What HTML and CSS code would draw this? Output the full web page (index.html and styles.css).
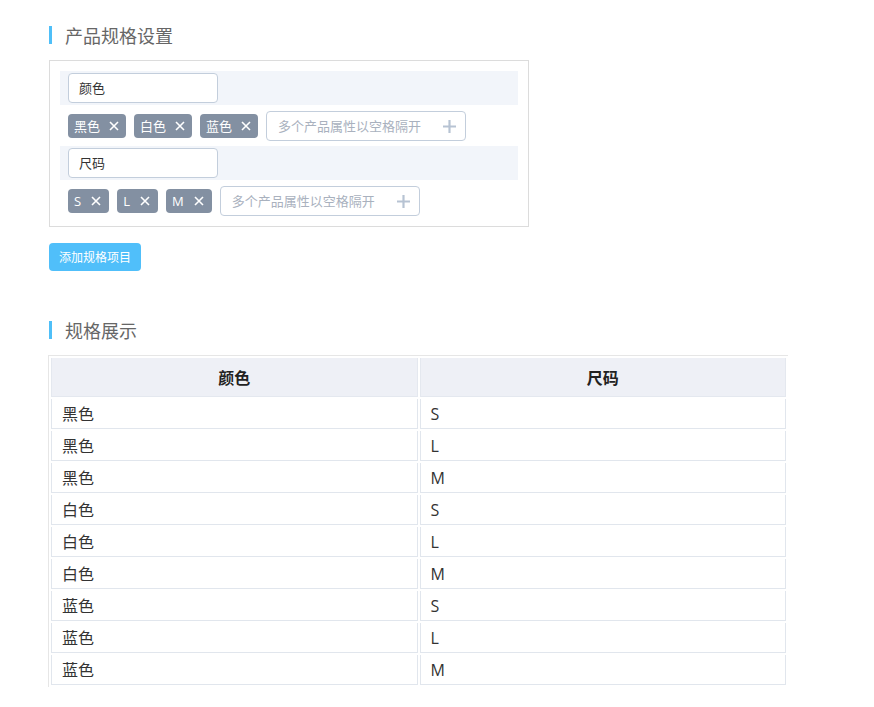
FILE: index.html
```html
<!DOCTYPE html>
<html lang="zh">
<head>
<meta charset="utf-8">
<title>产品规格设置</title>
<link rel="stylesheet" href="styles.css">
</head>
<body>
<div class="page">
  <div class="title"><span class="bar"></span><span class="title-text">产品规格设置</span></div>
  <div class="spec-box">
    <div class="group">
      <div class="group-head"><div class="name-input">颜色</div></div>
      <div class="tag-row">
        <span class="tag">黑色<svg class="x" viewBox="0 0 10 10"><path d="M1 1L9 9M9 1L1 9"/></svg></span>
        <span class="tag">白色<svg class="x" viewBox="0 0 10 10"><path d="M1 1L9 9M9 1L1 9"/></svg></span>
        <span class="tag">蓝色<svg class="x" viewBox="0 0 10 10"><path d="M1 1L9 9M9 1L1 9"/></svg></span>
        <div class="add-input"><span class="ph">多个产品属性以空格隔开</span><svg class="plus" viewBox="0 0 12 12"><path d="M6 0V12M0 6H12"/></svg></div>
      </div>
    </div>
    <div class="group">
      <div class="group-head"><div class="name-input">尺码</div></div>
      <div class="tag-row">
        <span class="tag tag-en">S<svg class="x" viewBox="0 0 10 10"><path d="M1 1L9 9M9 1L1 9"/></svg></span>
        <span class="tag tag-en">L<svg class="x" viewBox="0 0 10 10"><path d="M1 1L9 9M9 1L1 9"/></svg></span>
        <span class="tag tag-en">M<svg class="x" viewBox="0 0 10 10"><path d="M1 1L9 9M9 1L1 9"/></svg></span>
        <div class="add-input"><span class="ph">多个产品属性以空格隔开</span><svg class="plus" viewBox="0 0 12 12"><path d="M6 0V12M0 6H12"/></svg></div>
      </div>
    </div>
  </div>
  <button class="btn">添加规格项目</button>
  <div class="title title-2"><span class="bar"></span><span class="title-text">规格展示</span></div>
  <table class="spec-table">
    <thead>
      <tr><th>颜色</th><th>尺码</th></tr>
    </thead>
    <tbody>
      <tr><td>黑色</td><td>S</td></tr>
      <tr><td>黑色</td><td>L</td></tr>
      <tr><td>黑色</td><td>M</td></tr>
      <tr><td>白色</td><td>S</td></tr>
      <tr><td>白色</td><td>L</td></tr>
      <tr><td>白色</td><td>M</td></tr>
      <tr><td>蓝色</td><td>S</td></tr>
      <tr><td>蓝色</td><td>L</td></tr>
      <tr><td>蓝色</td><td>M</td></tr>
    </tbody>
  </table>
</div>
</body>
</html>
```
FILE: styles.css
```css
html, body {
  margin: 0;
  padding: 0;
  background: #fff;
}
body {
  font-family: "Noto Sans CJK SC", "Noto Sans", sans-serif;
  color: #333;
}
.page {
  padding: 26px 0 20px 49px;
}
.title {
  display: flex;
  align-items: center;
  height: 18px;
  margin-bottom: 16px;
}
.title-2 {
  margin-top: 50px;
}
.bar {
  width: 3px;
  height: 18px;
  background: #4fbff8;
}
.title-text {
  margin-left: 13px;
  font-size: 18px;
  line-height: 18px;
  color: #666;
}
.spec-box {
  width: 458px;
  border: 1px solid #dcdcdc;
  padding: 10px 10px 10px;
  display: flex;
  flex-direction: column;
  gap: 5px;
}
.group-head {
  background: #f2f5fa;
  padding: 2px 8px;
  height: 30px;
}
.name-input {
  box-sizing: border-box;
  width: 150px;
  height: 30px;
  border: 1px solid #c3cedc;
  border-radius: 4px;
  background: #fff;
  padding: 0 10px;
  font-size: 13px;
  line-height: 28px;
  color: #333;
}
.tag-row {
  display: flex;
  align-items: center;
  gap: 8px;
  padding: 6px 8px 0;
  height: 30px;
}
.tag {
  display: inline-flex;
  align-items: center;
  height: 24px;
  padding: 0 7px 0 6px;
  background: #8390a2;
  border-radius: 4px;
  color: #fff;
  font-family: "Open Sans", "Noto Sans CJK SC", sans-serif;
  font-size: 13px;
  line-height: 24px;
}
.tag-en {
  padding-right: 8px;
}
.x {
  width: 10px;
  height: 10px;
  margin-left: 9px;
  fill: none;
  stroke: #fff;
  stroke-width: 1.6;
}
.tag-en .x {
  margin-left: 10px;
}
.add-input {
  box-sizing: border-box;
  width: 200px;
  height: 30px;
  border: 1px solid #c3cedc;
  border-radius: 4px;
  display: flex;
  align-items: center;
  justify-content: space-between;
  padding: 0 9px 0 11px;
}
.ph {
  font-size: 13px;
  color: #a9b1be;
  line-height: 28px;
}
.plus {
  width: 13px;
  height: 13px;
  fill: none;
  stroke: #b7c3d3;
  stroke-width: 2;
}
.btn {
  display: block;
  margin-top: 16px;
  width: 92px;
  height: 28px;
  border: none;
  border-radius: 4px;
  background: #50bffa;
  color: #fff;
  font-family: "Noto Sans CJK SC", sans-serif;
  font-size: 12px;
  line-height: 28px;
  padding: 0;
}
.spec-table {
  width: 740px;
  table-layout: fixed;
  border-collapse: separate;
  border-spacing: 2px;
  border-top: 1px solid #e6e6e6;
  border-left: 1px solid #e6e6e6;
  border-bottom: none;
  border-right: none;
  margin-left: -1px;
}
.spec-table th,
.spec-table td {
  border: 1px solid #e1e6ed;
  border-top: 0;
  padding: 0 10px;
  text-align: left;
}
.spec-table th {
  height: 38px;
  background: #eef0f6;
  border-color: #e4e8ef;
  text-align: center;
  font-size: 16px;
  font-weight: bold;
  color: #222;
}
.spec-table td {
  height: 27px;
  padding-top: 2px;
  font-family: "Open Sans", "Noto Sans CJK SC", sans-serif;
  font-size: 16px;
  color: #333;
  line-height: 27px;
}
```
